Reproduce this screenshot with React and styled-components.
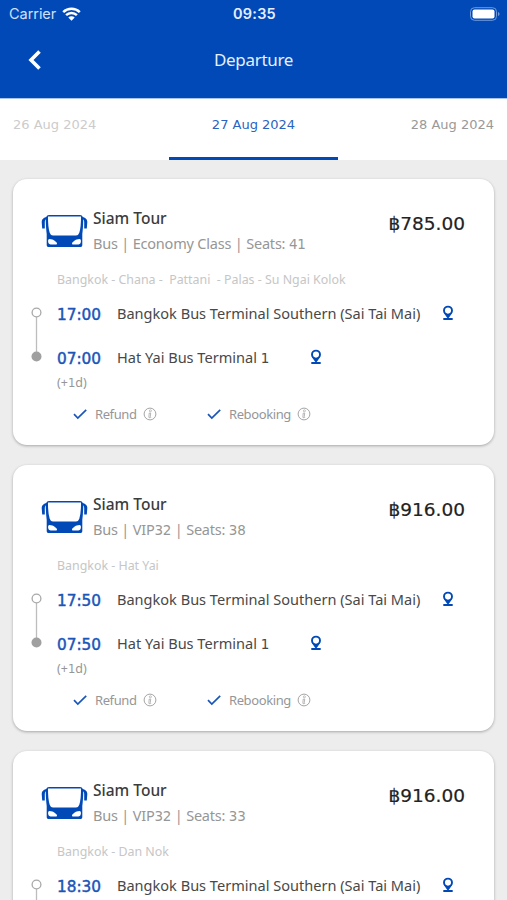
import React from 'react';
import styled, { createGlobalStyle } from 'styled-components';

const BLUE = '#0049b7';

const GlobalStyle = createGlobalStyle`
* { box-sizing: border-box; }
html, body {
  margin: 0;
  height: 100%;
  overflow: hidden;
  background: #ededed;
}
`;

const Screen = styled.div`
width: 507px;
height: 900px;
overflow: hidden;
background: #ededed;
font-family: 'Noto Sans', 'DejaVu Sans', sans-serif;
`;

const Header = styled.header`
height: 99px;
background: ${BLUE};
border-bottom: 1px solid #a9c4ea;
color: #e6efff;
`;

const StatusBar = styled.div`
display: grid;
grid-template-columns: 1fr auto 1fr;
align-items: center;
height: 27px;
padding: 0 7px 0 9px;
font-family: Inter, sans-serif;
font-size: 14.5px;
`;

const Carrier = styled.div`
display: flex;
align-items: center;
gap: 6px;
color: #cfe0fb;
letter-spacing: -0.05px;
`;

const Clock = styled.div`
font-weight: 600;
font-size: 14.5px;
letter-spacing: 0.2px;
`;

const BatteryBox = styled.div`
display: flex;
justify-content: flex-end;
`;

const NavBar = styled.div`
display: grid;
grid-template-columns: 40px 1fr 40px;
align-items: center;
height: 65px;
padding: 0 24px;
`;

const NavTitle = styled.h1`
margin: 0 0 1px;
text-align: center;
font-size: 17px;
font-weight: 400;
letter-spacing: -0.3px;
`;

const Tabs = styled.nav`
display: grid;
grid-template-columns: repeat(3, 1fr);
height: 61px;
background: #fff;
`;

const Tab = styled.div`
padding: 17px 13px 0;
border-bottom: 3px solid ${props => (props.$active ? BLUE : 'transparent')};
text-align: ${props => props.$align};
font-family: 'DejaVu Sans', sans-serif;
font-size: 13px;
line-height: 18px;
white-space: nowrap;
color: ${props => props.$color};
`;

const TripList = styled.main`
display: flex;
flex-direction: column;
gap: 20px;
padding: 19px 13px;
`;

const Card = styled.article`
flex: none;
height: 266px;
padding: 27px 29px 0 18px;
border-radius: 14px;
background: #fff;
box-shadow: 0 1px 3px rgba(0, 0, 0, 0.3);
`;

const CardTop = styled.div`
display: flex;
height: 50px;
padding-left: 10px;
`;

const BusIcon = styled.svg`
width: 47px;
height: 35px;
margin: 8px 5px 0 0;
`;

const Company = styled.div`
flex: 1;
white-space: nowrap;
`;

const CompanyName = styled.div`
font-size: 15.5px;
font-weight: 500;
line-height: 25px;
color: #3c3c3c;
`;

const CompanyInfo = styled.div`
font-size: 14.5px;
line-height: 25px;
letter-spacing: -0.2px;
color: #969696;
`;

const Price = styled.div`
padding-top: 5px;
font-family: 'DejaVu Sans', sans-serif;
font-size: 18.5px;
line-height: 25px;
color: #222;
-webkit-text-stroke: 0.2px #222;
`;

const Route = styled.div`
margin: 12px 0 0 26px;
font-size: 12.4px;
line-height: 24px;
white-space: pre;
color: #c6c6c6;
`;

const Journey = styled.div`
display: flex;
margin-top: 10px;
`;

const Rail = styled.svg`
width: 11px;
height: 56px;
margin: 4px 15px 0 0;
`;

const Stops = styled.div`
display: flex;
flex-direction: column;
gap: 20px;
`;

const Stop = styled.div`
display: flex;
align-items: center;
height: 24px;
white-space: nowrap;
`;

const StopTime = styled.div`
width: 60px;
padding-top: 1px;
font-family: 'DejaVu Sans', sans-serif;
font-size: 15.3px;
color: #1a55b8;
-webkit-text-stroke: 0.45px #1a55b8;
`;

const StopName = styled.div`
padding-bottom: 2px;
font-size: 14.55px;
color: #484848;
`;

const PinIcon = styled.svg`
width: 12px;
height: 16px;
margin: 0 0 3px ${props => props.$gap}px;
`;

const NextDay = styled.div`
margin: 3px 0 0 26px;
font-size: 12.5px;
line-height: 20px;
color: #969696;
`;

const Policies = styled.div`
display: flex;
align-items: center;
height: 22px;
margin: 10px 0 0 42px;
`;

const Policy = styled.div`
display: flex;
align-items: center;
width: 134px;
font-size: 13px;
letter-spacing: -0.4px;
color: #969696;
`;

const PolicyLabel = styled.span`
margin: 0 6px 0 8px;
`;

const Digits = styled.span`
font-family: 'DejaVu Sans', sans-serif;
font-size: 0.93em;
`;

// digits are set in the wider face, letters stay in the body font
const Mixed = ({ children }) =>
  children.split(/(\d+)/).map((part, i) =>
    /\d/.test(part) ? <Digits key={i}>{part}</Digits> : part
  );

const Wifi = () => (
  <svg width="19" height="14" viewBox="0 0 19 14" fill="none" stroke="#fff" strokeWidth="2.5">
    <path d="M1.2 5.1a12 12 0 0 1 16.6 0" />
    <path d="M4.1 8.2a7.8 7.8 0 0 1 10.8 0" />
    <path d="M9.5 13.8L6.3 10.5a4.6 4.6 0 0 1 6.4 0z" fill="#fff" stroke="none" />
  </svg>
);

const Battery = () => (
  <svg width="31" height="14" viewBox="0 0 31 14">
    <rect x="1.5" y="0.7" width="26" height="12.6" rx="4" fill="none" stroke="#6f9bdc" />
    <rect x="3.5" y="2.5" width="22" height="9" rx="2" fill="#fff" />
    <path d="M29 5v4q1.6-.6 1.6-2T29 5z" fill="#6f9bdc" />
  </svg>
);

const BackArrow = () => (
  <svg width="22" height="22" viewBox="0 0 22 22" fill="none" stroke="#fff" strokeWidth="3.6">
    <path d="M15.5 2.5L7 11l8.5 8.5" />
  </svg>
);

const Bus = () => (
  <BusIcon viewBox="0 0 47 35">
    <path
      fill={BLUE}
      d="M8 1H39Q41 1 42 3.2H42.8Q46.5 5 46.3 8L45.8 14.5H43.2V8Q43.2 6 42.3 5.3Q42 15 41.3 20V31.3Q41.3 33 39.8 33H7.2Q5.7 33 5.7 31.3V20Q5 15 4.7 5.3Q3.8 6 3.8 8V14.5H1.2L.7 8Q.5 5 4.2 3.2H5Q6 1 8 1Z"
    />
    <path fill="#fff" d="M7 2.5Q6.9 13 8.7 18.7Q9.6 21.6 12 21.6H35Q37.4 21.6 38.3 18.7Q40.1 13 40 2.5Z" />
    <path fill="#fff" d="M8 25Q6.8 25.4 7.1 28Q7.4 30.4 9.5 30.5H14.5Q16.8 30.3 15.6 28.4Q12.5 25 8 25Z" />
    <path fill="#fff" d="M39 25Q40.2 25.4 39.9 28Q39.6 30.4 37.5 30.5H32.5Q30.2 30.3 31.4 28.4Q34.5 25 39 25Z" />
  </BusIcon>
);

const Pin = ({ gap }) => (
  <PinIcon $gap={gap} viewBox="0 0 12 16" fill="none" stroke={BLUE}>
    <circle cx="6" cy="5.6" r="4" strokeWidth="1.9" />
    <path d="M2.6 8.4L6 13.4L9.4 8.4L7.6 9.6H4.4Z" fill={BLUE} strokeWidth="0.8" />
    <path d="M1.3 14H10.7" strokeWidth="2" />
  </PinIcon>
);

const Check = () => (
  <svg width="14" height="12" viewBox="0 0 14 12" fill="none" stroke="#1a55b8" strokeWidth="1.7">
    <path d="M1 6.2l3.8 3.8L13.2 1.8" />
  </svg>
);

const Info = () => (
  <svg width="14" height="14" viewBox="0 0 14 14" fill="none" stroke="#a5a5a5">
    <circle cx="7" cy="7" r="5.9" />
    <circle cx="7.4" cy="3.8" r="1" strokeWidth="0.7" />
    <path d="M6.2 6.1h1.5L7.3 9.6l.5.7-1.6.5-.3-.9z" strokeWidth="0.8" />
  </svg>
);

const Trip = ({ trip }) => (
  <Card>
    <CardTop>
      <Bus />
      <Company>
        <CompanyName>Siam Tour</CompanyName>
        <CompanyInfo><Mixed>{trip.info}</Mixed></CompanyInfo>
      </Company>
      <Price>{trip.price}</Price>
    </CardTop>
    <Route>{trip.route}</Route>
    <Journey>
      <Rail viewBox="0 0 11 56">
        <path d="M5.5 10V46" stroke="#bdbdbd" strokeWidth="1.3" />
        <circle cx="5.5" cy="6.5" r="4.4" fill="#fff" stroke="#a8a8a8" strokeWidth="1.3" />
        <circle cx="5.5" cy="50.5" r="5" fill="#a0a0a0" />
      </Rail>
      <Stops>
        <Stop>
          <StopTime>{trip.departs}</StopTime>
          <StopName>Bangkok Bus Terminal Southern (Sai Tai Mai)</StopName>
          <Pin gap={22} />
        </Stop>
        {trip.arrives && (
          <Stop>
            <StopTime>{trip.arrives}</StopTime>
            <StopName><Mixed>Hat Yai Bus Terminal 1</Mixed></StopName>
            <Pin gap={41} />
          </Stop>
        )}
      </Stops>
    </Journey>
    {trip.arrives && (
      <>
        <NextDay><Mixed>(+1d)</Mixed></NextDay>
        <Policies>
          {['Refund', 'Rebooking'].map(label => (
            <Policy key={label}>
              <Check />
              <PolicyLabel>{label}</PolicyLabel>
              <Info />
            </Policy>
          ))}
        </Policies>
      </>
    )}
  </Card>
);

const trips = [
  {
    info: 'Bus | Economy Class | Seats: 41',
    price: '฿785.00',
    route: 'Bangkok - Chana -  Pattani  - Palas - Su Ngai Kolok',
    departs: '17:00',
    arrives: '07:00',
  },
  {
    info: 'Bus | VIP32 | Seats: 38',
    price: '฿916.00',
    route: 'Bangkok - Hat Yai',
    departs: '17:50',
    arrives: '07:50',
  },
  {
    info: 'Bus | VIP32 | Seats: 33',
    price: '฿916.00',
    route: 'Bangkok - Dan Nok',
    departs: '18:30',
  },
];

export default () => (
  <Screen>
    <GlobalStyle />
    <Header>
      <StatusBar>
        <Carrier>Carrier <Wifi /></Carrier>
        <Clock>09:35</Clock>
        <BatteryBox><Battery /></BatteryBox>
      </StatusBar>
      <NavBar>
        <BackArrow />
        <NavTitle>Departure</NavTitle>
      </NavBar>
    </Header>
    <Tabs>
      <Tab $align="left" $color="#cccccc">26 Aug 2024</Tab>
      <Tab $align="center" $color="#2a63c0" $active>27 Aug 2024</Tab>
      <Tab $align="right" $color="#999999">28 Aug 2024</Tab>
    </Tabs>
    <TripList>
      {trips.map((trip, i) => <Trip key={i} trip={trip} />)}
    </TripList>
  </Screen>
);
